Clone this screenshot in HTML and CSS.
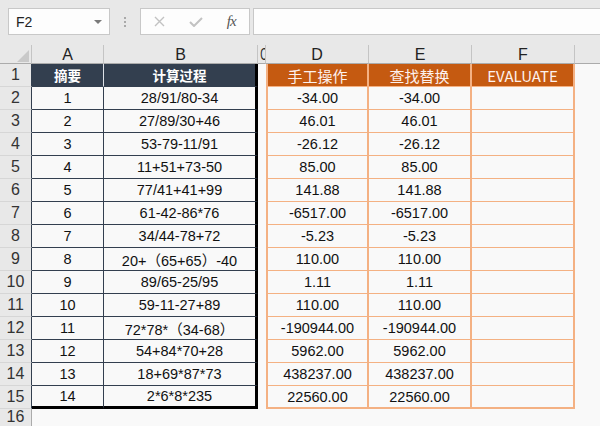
FILE: index.html
```html
<!DOCTYPE html>
<html lang="zh-CN">
<head>
  <meta charset="UTF-8" />
  <title>计算过程</title>
  <link rel="stylesheet" href="styles.css">
</head>
<body>
  <div class="formula-bar">
    <div class="name-box">
      <span>F2</span>
      <svg width="8" height="5" viewBox="0 0 8 5"><polygon points="0,0 8,0 4,4" fill="#7a7a7a"/></svg>
    </div>
    <div class="grip"><i></i><i></i><i></i></div>
    <div class="fx-buttons">
      <span class="btn">
        <svg width="11" height="11" viewBox="0 0 11 11"><path d="M1 1 L10 10 M10 1 L1 10" stroke="#c2c2c2" stroke-width="1.4" fill="none"/></svg>
      </span>
      <span class="btn">
        <svg width="14" height="10" viewBox="0 0 14 10"><path d="M1 5 L5 9 L13 1" stroke="#c2c2c2" stroke-width="2" fill="none"/></svg>
      </span>
      <span class="btn fx">fx</span>
    </div>
    <div class="formula-input"></div>
  </div>

  <table class="sheet">
    <colgroup>
      <col style="width:32px">
      <col style="width:72px">
      <col style="width:154px">
      <col style="width:8px">
      <col style="width:103px">
      <col style="width:103px">
      <col style="width:103px">
      <col style="width:25px">
    </colgroup>
    <thead>
      <tr class="col-head">
        <th class="corner"><svg width="12" height="12" viewBox="0 0 12 12"><polygon points="12,0 12,12 0,12" fill="#c9c9c9"/></svg></th>
        <th>A</th><th>B</th><th class="narrow"><span>C</span></th><th>D</th><th>E</th><th>F</th><th class="blank"></th>
      </tr>
    </thead>
    <tbody>
      <tr>
        <th class="row-head">1</th>
        <th class="h-dark">摘要</th><th class="h-dark b">计算过程</th><td></td>
        <th class="h-orange d">手工操作</th><th class="h-orange">查找替换</th><th class="h-orange">EVALUATE</th><td></td>
      </tr>
      <tr><th class="row-head">2</th><td class="a">1</td><td class="b">28/91/80-34</td><td></td><td class="d">-34.00</td><td class="e">-34.00</td><td class="f"></td><td></td></tr>
      <tr><th class="row-head">3</th><td class="a">2</td><td class="b">27/89/30+46</td><td></td><td class="d">46.01</td><td class="e">46.01</td><td class="f"></td><td></td></tr>
      <tr><th class="row-head">4</th><td class="a">3</td><td class="b">53-79-11/91</td><td></td><td class="d">-26.12</td><td class="e">-26.12</td><td class="f"></td><td></td></tr>
      <tr><th class="row-head">5</th><td class="a">4</td><td class="b">11+51+73-50</td><td></td><td class="d">85.00</td><td class="e">85.00</td><td class="f"></td><td></td></tr>
      <tr><th class="row-head">6</th><td class="a">5</td><td class="b">77/41+41+99</td><td></td><td class="d">141.88</td><td class="e">141.88</td><td class="f"></td><td></td></tr>
      <tr><th class="row-head">7</th><td class="a">6</td><td class="b">61-42-86*76</td><td></td><td class="d">-6517.00</td><td class="e">-6517.00</td><td class="f"></td><td></td></tr>
      <tr><th class="row-head">8</th><td class="a">7</td><td class="b">34/44-78+72</td><td></td><td class="d">-5.23</td><td class="e">-5.23</td><td class="f"></td><td></td></tr>
      <tr><th class="row-head">9</th><td class="a">8</td><td class="b">20+（65+65）-40</td><td></td><td class="d">110.00</td><td class="e">110.00</td><td class="f"></td><td></td></tr>
      <tr><th class="row-head">10</th><td class="a">9</td><td class="b">89/65-25/95</td><td></td><td class="d">1.11</td><td class="e">1.11</td><td class="f"></td><td></td></tr>
      <tr><th class="row-head">11</th><td class="a">10</td><td class="b">59-11-27+89</td><td></td><td class="d">110.00</td><td class="e">110.00</td><td class="f"></td><td></td></tr>
      <tr><th class="row-head">12</th><td class="a">11</td><td class="b">72*78*（34-68）</td><td></td><td class="d">-190944.00</td><td class="e">-190944.00</td><td class="f"></td><td></td></tr>
      <tr><th class="row-head">13</th><td class="a">12</td><td class="b">54+84*70+28</td><td></td><td class="d">5962.00</td><td class="e">5962.00</td><td class="f"></td><td></td></tr>
      <tr><th class="row-head">14</th><td class="a">13</td><td class="b">18+69*87*73</td><td></td><td class="d">438237.00</td><td class="e">438237.00</td><td class="f"></td><td></td></tr>
      <tr class="last"><th class="row-head">15</th><td class="a">14</td><td class="b">2*6*8*235</td><td></td><td class="d">22560.00</td><td class="e">22560.00</td><td class="f"></td><td></td></tr>
      <tr class="empty"><th class="row-head">16</th><td></td><td></td><td></td><td></td><td></td><td></td><td></td></tr>
    </tbody>
  </table>
</body>
</html>
```

FILE: styles.css
```css
:root {
  --chrome: #e8e8e8;
  --cell: #f9f9f9;
  --slate: #333f4f;
  --orange: #c55a11;
  --orange-line: #f4b183;
}

* {
  box-sizing: border-box;
}

html,
body {
  margin: 0;
  background: var(--cell);
}

body {
  width: 600px;
  font-family: "Liberation Sans", "Noto Sans CJK SC", sans-serif;
}

/* formula bar */

.formula-bar {
  display: flex;
  height: 45px;
  padding: 8px 0 10px 8px;
  background: var(--chrome);
}

.name-box {
  width: 102px;
  background: #fdfdfd;
  border: 1px solid #c8c8c8;
  display: flex;
  align-items: center;
  justify-content: space-between;
  padding: 0 7px;
  font-size: 14px;
  color: #222;
}

.name-box svg {
  margin-top: 1px;
}

.grip {
  width: 30px;
  display: flex;
  flex-direction: column;
  align-items: center;
  justify-content: center;
  gap: 2px;
}

.grip i {
  width: 2px;
  height: 2px;
  background: #a9a9a9;
}

.fx-buttons {
  width: 110px;
  background: #fdfdfd;
  border: 1px solid #c8c8c8;
  display: flex;
  align-items: center;
  padding-left: 1px;
}

.btn {
  width: 36px;
  display: flex;
  justify-content: center;
  align-items: center;
}

.fx {
  font-family: "Liberation Serif", serif;
  font-style: italic;
  font-size: 15px;
  color: #555;
  letter-spacing: -1px;
}

.formula-input {
  flex: 1;
  margin-left: 3px;
  background: #fdfdfd;
  border: 1px solid #c8c8c8;
  border-right: none;
}

/* sheet */

.sheet {
  border-collapse: separate;
  border-spacing: 0;
  table-layout: fixed;
  width: 600px;
  background: var(--cell);
}

.sheet th,
.sheet td {
  padding: 0;
  text-align: center;
  white-space: nowrap;
  overflow: hidden;
}

.col-head th {
  height: 19px;
  background: var(--chrome);
  border-right: 1px solid #c4c4c4;
  border-bottom: 1px solid #ababab;
  font-weight: normal;
  font-size: 16px;
  line-height: 17px;
  color: #222;
}

.col-head th.narrow span {
  display: inline-block;
  transform: scaleX(0.62);
}

.col-head th.blank {
  border-right: none;
}

.col-head th.corner {
  text-align: right;
  vertical-align: bottom;
  padding: 0 2px 1px 0;
  line-height: 0;
}

.sheet tbody tr {
  height: 23px;
}

.row-head {
  background: var(--chrome);
  border-right: 1px solid var(--slate);
  border-bottom: 1px solid #d6d6d6;
  font-weight: normal;
  font-size: 16px;
  color: #333;
}

.empty .row-head {
  border-right-color: #ababab;
  vertical-align: top;
  line-height: 16px;
}

.sheet td {
  font-size: 14.5px;
  color: #111;
}

.h-dark {
  background: var(--slate);
  color: #fff;
  font-family: "Noto Sans CJK SC", sans-serif;
  font-weight: bold;
  font-size: 13.5px;
  border-right: 1px solid #dde1e7;
  border-bottom: 1px solid var(--slate);
}

.h-orange {
  background: var(--orange);
  color: #fdf1ee;
  font-family: "Noto Sans CJK SC", sans-serif;
  font-weight: normal;
  font-size: 15px;
  border-right: 2px solid var(--orange-line);
  border-bottom: 1px solid var(--orange-line);
}

td.a,
td.b {
  border-right: 1px solid var(--slate);
  border-bottom: 1px solid var(--slate);
}

.sheet .b {
  border-right: 3px solid #000;
}

.last td.a,
.last td.b {
  border-bottom: 3px solid #000;
}

td.d,
td.e,
td.f {
  border-right: 2px solid var(--orange-line);
  border-bottom: 1px solid var(--orange-line);
}

.sheet .d {
  border-left: 2px solid var(--orange-line);
}

.last td.d,
.last td.e,
.last td.f {
  border-bottom: 2px solid var(--orange-line);
}
```
